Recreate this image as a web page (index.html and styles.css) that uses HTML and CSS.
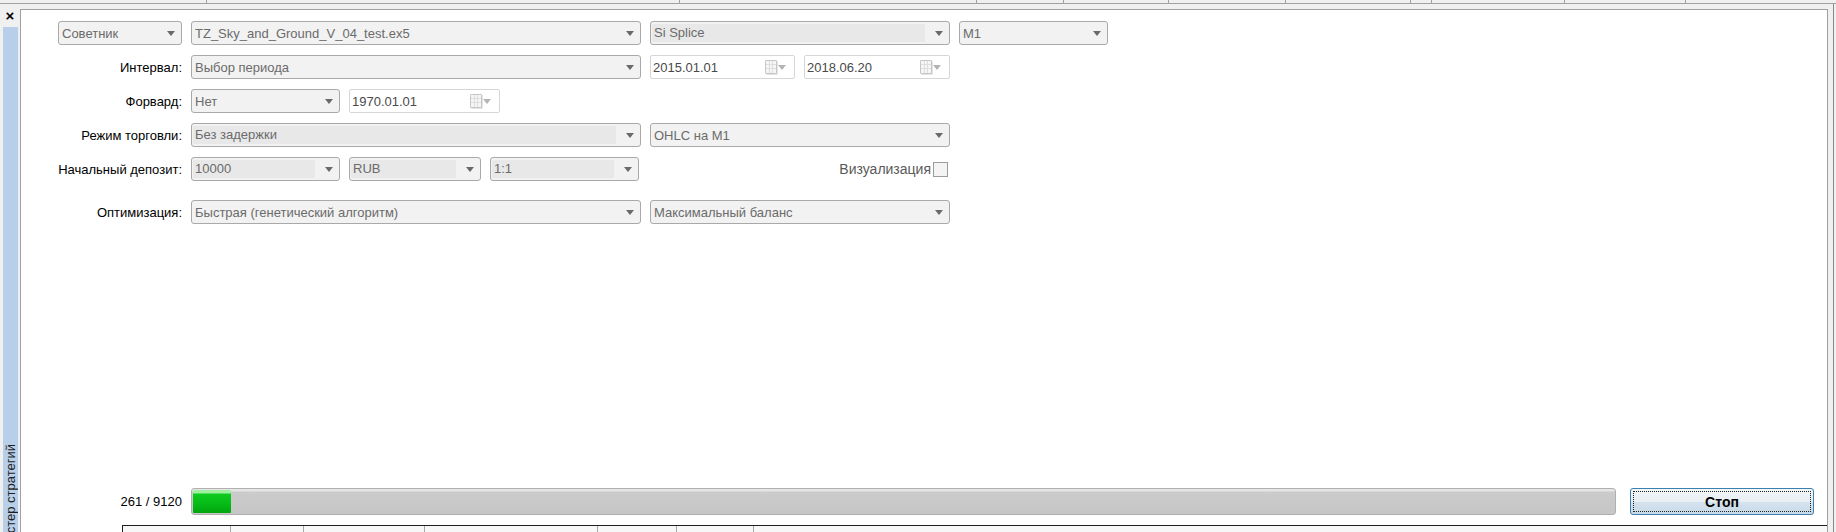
FILE: index.html
```html
<!DOCTYPE html>
<html lang="ru">
<head>
    <meta charset="UTF-8">
    <title>Тестер стратегий</title>
    <link rel="stylesheet" href="styles.css">
</head>
<body>
    <div class="tabs">
        <div class="tab"></div><div class="tab"></div><div class="tab"></div><div class="tab"></div>
        <div class="tab"></div><div class="tab"></div><div class="tab"></div><div class="tab"></div>
        <div class="tab"></div><div class="tab"></div><div class="tab"></div>
    </div>

    <div class="workspace">
        <aside class="side">
            <div class="close">&#215;</div>
            <div class="vtab"><span class="vtab-text">Тестер стратегий</span></div>
        </aside>

        <section class="panel">
            <div class="form">
                <div class="row">
                    <div class="label"><div class="select w-expert"><span class="value">Советник</span><span class="arrow"></span></div></div>
                    <div class="select w-wide"><span class="value">TZ_Sky_and_Ground_V_04_test.ex5</span><span class="arrow"></span></div>
                    <div class="select combo w-mid"><span class="field">Si Splice</span><span class="arrow"></span></div>
                    <div class="select w-short"><span class="value">M1</span><span class="arrow"></span></div>
                </div>

                <div class="row">
                    <div class="label">Интервал:</div>
                    <div class="select w-wide"><span class="value">Выбор периода</span><span class="arrow"></span></div>
                    <div class="date w-date"><span class="value">2015.01.01</span><span class="cal"></span><span class="arrow light"></span></div>
                    <div class="date w-date2"><span class="value">2018.06.20</span><span class="cal"></span><span class="arrow light"></span></div>
                </div>

                <div class="row">
                    <div class="label">Форвард:</div>
                    <div class="select w-short"><span class="value">Нет</span><span class="arrow"></span></div>
                    <div class="date w-date3"><span class="value">1970.01.01</span><span class="cal"></span><span class="arrow light"></span></div>
                </div>

                <div class="row">
                    <div class="label">Режим торговли:</div>
                    <div class="select combo w-wide"><span class="field">Без задержки</span><span class="arrow"></span></div>
                    <div class="select w-mid"><span class="value">OHLC на M1</span><span class="arrow"></span></div>
                </div>

                <div class="row">
                    <div class="label">Начальный депозит:</div>
                    <div class="select combo w-short"><span class="field">10000</span><span class="arrow"></span></div>
                    <div class="select combo w-cur"><span class="field">RUB</span><span class="arrow"></span></div>
                    <div class="select combo w-short"><span class="field">1:1</span><span class="arrow"></span></div>
                    <label class="viz">Визуализация<span class="check"></span></label>
                </div>

                <div class="row row-opt">
                    <div class="label">Оптимизация:</div>
                    <div class="select w-wide"><span class="value">Быстрая (генетический алгоритм)</span><span class="arrow"></span></div>
                    <div class="select w-mid"><span class="value">Максимальный баланс</span><span class="arrow"></span></div>
                </div>
            </div>

            <div class="progress-row">
                <div class="label">261 / 9120</div>
                <div class="progress"><div class="progress-fill"></div></div>
                <button class="stop">Стоп</button>
            </div>

            <div class="results-head">
                <div class="col"></div><div class="col"></div><div class="col"></div>
                <div class="col"></div><div class="col"></div><div class="col"></div><div class="col"></div>
            </div>
        </section>

        <div class="edge"></div>
    </div>
</body>
</html>
```

FILE: styles.css
```css
body {
    margin: 0;
    width: 1836px;
    height: 532px;
    overflow: hidden;
    background-color: #f0f0f0;
    font-family: 'Liberation Sans', Arial, sans-serif;
    font-size: 13px;
    color: #000;
}

/* strip of tab headers from the window above */
.tabs {
    display: grid;
    grid-template-columns: 207px 473px 297px 87px 105px 117px 125px 21px 133px 121px 1fr;
    height: 3px;
    border-bottom: 1px solid #a0a0a0;
}

.tab {
    border-right: 1px solid #a0a0a0;
}

.tab:last-child {
    border-right: none;
}

.workspace {
    display: flex;
    height: 528px;
    padding-right: 2px;
}

.side {
    width: 20px;
    display: flex;
    flex-direction: column;
}

.close {
    height: 23px;
    line-height: 23px;
    text-align: center;
    font-size: 15px;
    font-weight: bold;
}

.vtab {
    flex: 1;
    width: 15px;
    margin-left: 3px;
    background-color: #b7cfe9;
    border-right: 1px solid #e8eef5;
    display: flex;
    flex-direction: column;
    justify-content: flex-end;
    align-items: center;
    overflow: hidden;
}

.vtab-text {
    writing-mode: vertical-rl;
    transform: rotate(180deg);
    white-space: nowrap;
    font-size: 13px;
    color: #1e1e1e;
    margin-bottom: -16px;
}

.panel {
    flex: 1;
    margin-top: 5px;
    background-color: #fff;
    border: 1px solid #a0a0a0;
    border-bottom: none;
    display: flex;
    flex-direction: column;
    overflow: hidden;
}

.edge {
    width: 5px;
    border-right: 1px solid #8a8a8a;
}

.form {
    padding-top: 11px;
}

.row {
    display: flex;
    align-items: center;
    gap: 9px;
    height: 24px;
}

.row + .row {
    margin-top: 10px;
}

.row-opt.row {
    margin-top: 19px;
}

.label {
    width: 161px;
    flex: none;
    display: flex;
    justify-content: flex-end;
    white-space: nowrap;
}

.select,
.date {
    box-sizing: border-box;
    height: 24px;
    display: flex;
    align-items: center;
    flex: none;
    color: #6b6b6b;
    white-space: nowrap;
}

.select {
    background-color: #f2f2f2;
    border: 1px solid #a9a9a9;
    border-radius: 3px;
    padding-left: 3px;
}

.value {
    flex: 1;
    overflow: hidden;
}

.combo {
    padding-left: 1px;
}

.field {
    flex: 1;
    height: 18px;
    line-height: 18px;
    padding-left: 2px;
    background-color: #e8e8e8;
    overflow: hidden;
}

.arrow {
    flex: none;
    width: 0;
    height: 0;
    margin: 1px 6px 0 10px;
    border-left: 4px solid transparent;
    border-right: 4px solid transparent;
    border-top: 5px solid #6a6a6a;
}

.arrow.light {
    margin-left: 1px;
    margin-right: 8px;
    border-top-color: #b4b4b4;
}

.date {
    background-color: #fff;
    border: 1px solid #d6d6d6;
    border-radius: 2px;
    padding-left: 2px;
    color: #4a4a4a;
}

.cal {
    flex: none;
    width: 10px;
    height: 12px;
    border: 1px solid #c6c6c6;
    border-radius: 1px;
    background-color: #f6f6f6;
    background-image:
        linear-gradient(90deg, transparent 3px, #dedede 3px, #dedede 4px, transparent 4px, transparent 6px, #dedede 6px, #dedede 7px, transparent 7px),
        linear-gradient(transparent 3px, #dedede 3px, #dedede 4px, transparent 4px, transparent 7px, #dedede 7px, #dedede 8px, transparent 8px);
    box-shadow: 1px 1px 0 #e4e4e4;
}

.w-expert { width: 124px; }
.w-wide { width: 450px; }
.w-mid { width: 300px; }
.w-short { width: 149px; }
.w-cur { width: 132px; }
.w-date { width: 145px; }
.w-date2 { width: 146px; }
.w-date3 { width: 151px; }

.viz {
    width: 300px;
    display: flex;
    justify-content: flex-end;
    align-items: center;
    gap: 2px;
    font-size: 14px;
    color: #5a5a5a;
}

.check {
    box-sizing: border-box;
    width: 15px;
    height: 15px;
    border: 1px solid #9c9c9c;
    background-color: #f4f4f4;
}

.progress-row {
    margin-top: auto;
    display: flex;
    align-items: center;
    gap: 9px;
    height: 27px;
    padding-right: 13px;
}

.progress {
    flex: 1;
    height: 27px;
    box-sizing: border-box;
    border: 1px solid #b0b0b0;
    border-radius: 3px;
    background: linear-gradient(#e6e6e6 0, #e6e6e6 2px, #cbcbcb 3px, #c6c6c6 100%);
    display: flex;
    padding: 1px;
}

.progress-fill {
    width: 38px;
    border-radius: 1px;
    background: linear-gradient(#9ff09f 0, #9ff09f 3px, #0fca1f 4px, #06bb16 60%, #02a50f 100%);
}

.stop {
    width: 184px;
    height: 27px;
    margin-left: 5px;
    flex: none;
    border: 1px solid #3c7fb1;
    border-radius: 3px;
    background: linear-gradient(#f1f5f8 0, #e9eff4 50%, #d5e3ee 51%, #c7d9e7 100%);
    outline: 1px dotted #222;
    outline-offset: -4px;
    font-family: 'Liberation Sans', Arial, sans-serif;
    font-size: 14px;
    font-weight: bold;
    color: #000;
    padding: 0;
}

.results-head {
    margin-top: 10px;
    margin-left: 101px;
    height: 6px;
    border-top: 1px solid #1e1e1e;
    border-left: 1px solid #1e1e1e;
    background-color: #f7f7f7;
    display: grid;
    grid-template-columns: 108px 73px 121px 173px 79px 77px 1fr;
}

.col {
    border-right: 1px solid #a8a8a8;
}

.col:last-child {
    border-right: none;
}
```
